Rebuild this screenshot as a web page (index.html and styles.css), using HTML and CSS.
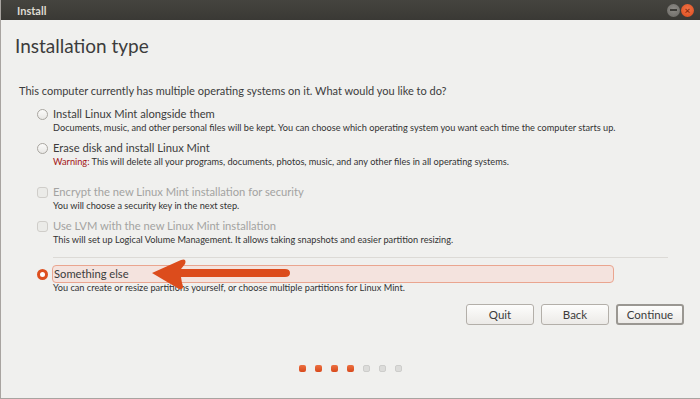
FILE: index.html
```html
<!DOCTYPE html>
<html lang="en">

<head>
    <meta charset="UTF-8">
    <title>Install</title>
    <link rel="stylesheet" href="styles.css">
</head>

<body>
    <div class="window">
        <div class="titlebar">
            <span class="title">Install</span>
            <div class="window-buttons">
                <span class="wbtn minimize"></span>
                <span class="wbtn close">×</span>
            </div>
        </div>

        <div class="content">
            <h1>Installation type</h1>
            <p class="question">This computer currently has multiple operating systems on it. What would you like to do?</p>

            <div class="options">
                <div class="option">
                    <div class="option-label"><span class="radio"></span>Install Linux Mint alongside them</div>
                    <div class="desc">Documents, music, and other personal files will be kept. You can choose which operating system you want each time the computer starts up.</div>
                </div>

                <div class="option">
                    <div class="option-label"><span class="radio"></span>Erase disk and install Linux Mint</div>
                    <div class="desc"><span class="warning">Warning:</span> This will delete all your programs, documents, photos, music, and any other files in all operating systems.</div>
                </div>

                <div class="option sub disabled">
                    <div class="option-label"><span class="checkbox"></span>Encrypt the new Linux Mint installation for security</div>
                    <div class="desc">You will choose a security key in the next step.</div>
                </div>

                <div class="option disabled">
                    <div class="option-label"><span class="checkbox"></span>Use LVM with the new Linux Mint installation</div>
                    <div class="desc">This will set up Logical Volume Management. It allows taking snapshots and easier partition resizing.</div>
                </div>

                <hr class="separator">

                <div class="option selected">
                    <div class="option-label"><span class="radio checked"></span><span class="highlight">Something else</span></div>
                    <div class="desc">You can create or resize partitions yourself, or choose multiple partitions for Linux Mint.</div>
                    <svg class="arrow" width="150" height="34" viewBox="0 0 150 34">
                        <path d="M2,15 L31,2 Q37,0 35,6 L31,11 L135,11 Q140,11 140,15 Q140,19 135,19 L31,19 L32,25 Q35,32 29,31 Z" fill="#dc4c1c"/>
                    </svg>
                </div>
            </div>

            <div class="actions">
                <button type="button">Quit</button>
                <button type="button">Back</button>
                <button type="button" class="default">Continue</button>
            </div>

            <div class="steps">
                <span class="dot done"></span>
                <span class="dot done"></span>
                <span class="dot done"></span>
                <span class="dot done"></span>
                <span class="dot"></span>
                <span class="dot"></span>
                <span class="dot"></span>
            </div>
        </div>
    </div>
</body>

</html>
```

FILE: styles.css
```css
body {
    margin: 0;
    font-family: 'Lato', 'DejaVu Sans', sans-serif;
    color: #3c3c3c;
    background-color: #f0f0ee;
}

.window {
    width: 700px;
    height: 399px;
    box-sizing: border-box;
    border-left: 1px solid #a8a4a0;
    border-bottom: 1px solid #a8a4a0;
    background-color: #f0f0ee;
    display: flex;
    flex-direction: column;
}

.titlebar {
    height: 20px;
    flex-shrink: 0;
    background: linear-gradient(#45443f, #3a3935);
    display: flex;
    align-items: center;
    justify-content: space-between;
    padding: 0 6px 0 16px;
}

.title {
    color: #dfdbd2;
    font-size: 11px;
    font-weight: bold;
}

.window-buttons {
    display: flex;
    gap: 1px;
}

.wbtn {
    width: 13px;
    height: 13px;
    border-radius: 50%;
    display: flex;
    align-items: center;
    justify-content: center;
    font-size: 10px;
    line-height: 1;
}

.minimize {
    background: radial-gradient(circle at 50% 40%, #8e8c87, #6a6864);
}

.minimize::after {
    content: "";
    width: 7px;
    height: 2px;
    background-color: #3c3b37;
}

.close {
    background: radial-gradient(circle at 50% 40%, #f27547, #d9481b);
    color: #8a2a0c;
    font-weight: bold;
}

.content {
    flex: 1;
    padding: 0 16px 0 14px;
}

h1 {
    font-size: 19px;
    font-weight: normal;
    margin: 14px 0 0;
    line-height: 24px;
}

.question {
    font-size: 11px;
    margin: 25px 0 0 4px;
    line-height: 16px;
}

.options {
    margin: 8px 0 0 22px;
}

.option {
    position: relative;
    margin-bottom: 6px;
}

.option-label {
    display: flex;
    align-items: center;
    font-size: 11.2px;
    line-height: 14px;
}

.desc {
    font-size: 9.2px;
    line-height: 14px;
    margin-left: 16px;
    color: #333;
}

.warning {
    color: #a31515;
}

.radio,
.checkbox {
    width: 11px;
    height: 11px;
    margin-right: 5px;
    box-sizing: border-box;
    border: 1px solid #a9a6a0;
    background: linear-gradient(#fbfbfa, #e8e7e4);
    flex-shrink: 0;
}

.radio {
    border-radius: 50%;
}

.checkbox {
    border-radius: 3px;
}

.radio.checked {
    border: 3px solid #dd4f1f;
    background: #fff;
}

.sub {
    margin-top: 16px;
}

.disabled .option-label {
    color: #a3a3a1;
}

.disabled .checkbox {
    border-color: #cfcdc9;
    background: #ebebe8;
}

.separator {
    border: none;
    border-top: 1px solid #dcdad6;
    margin: 10px 16px 9px 16px;
}

.highlight {
    flex: 1;
    background-color: #f4e3de;
    border: 1px solid #eaa58f;
    border-radius: 4px;
    padding: 1px 0 1px 1px;
    margin: -2px 70px -2px -1px;
}

.arrow {
    position: absolute;
    left: 113px;
    top: -9px;
}

.actions {
    display: flex;
    justify-content: flex-end;
    gap: 7px;
    margin-top: 9px;
}

button {
    width: 68px;
    height: 21px;
    font-family: 'Lato', 'DejaVu Sans', sans-serif;
    font-size: 11.5px;
    color: #3c3c3c;
    background: linear-gradient(#fdfdfc, #eceae7);
    border: 1px solid #b3afa9;
    border-radius: 3px;
    padding: 0;
}

button.default {
    border: 2px solid #9a9792;
}

.steps {
    display: flex;
    justify-content: center;
    gap: 9px;
    margin: 40px 0 0 2px;
}

.dot {
    width: 7px;
    height: 7px;
    border-radius: 2px;
    box-sizing: border-box;
    background-color: #dcdcda;
    border: 1px solid #cdcdcb;
}

.dot.done {
    background: linear-gradient(#ec7040, #d8491c);
    border: none;
}
```
